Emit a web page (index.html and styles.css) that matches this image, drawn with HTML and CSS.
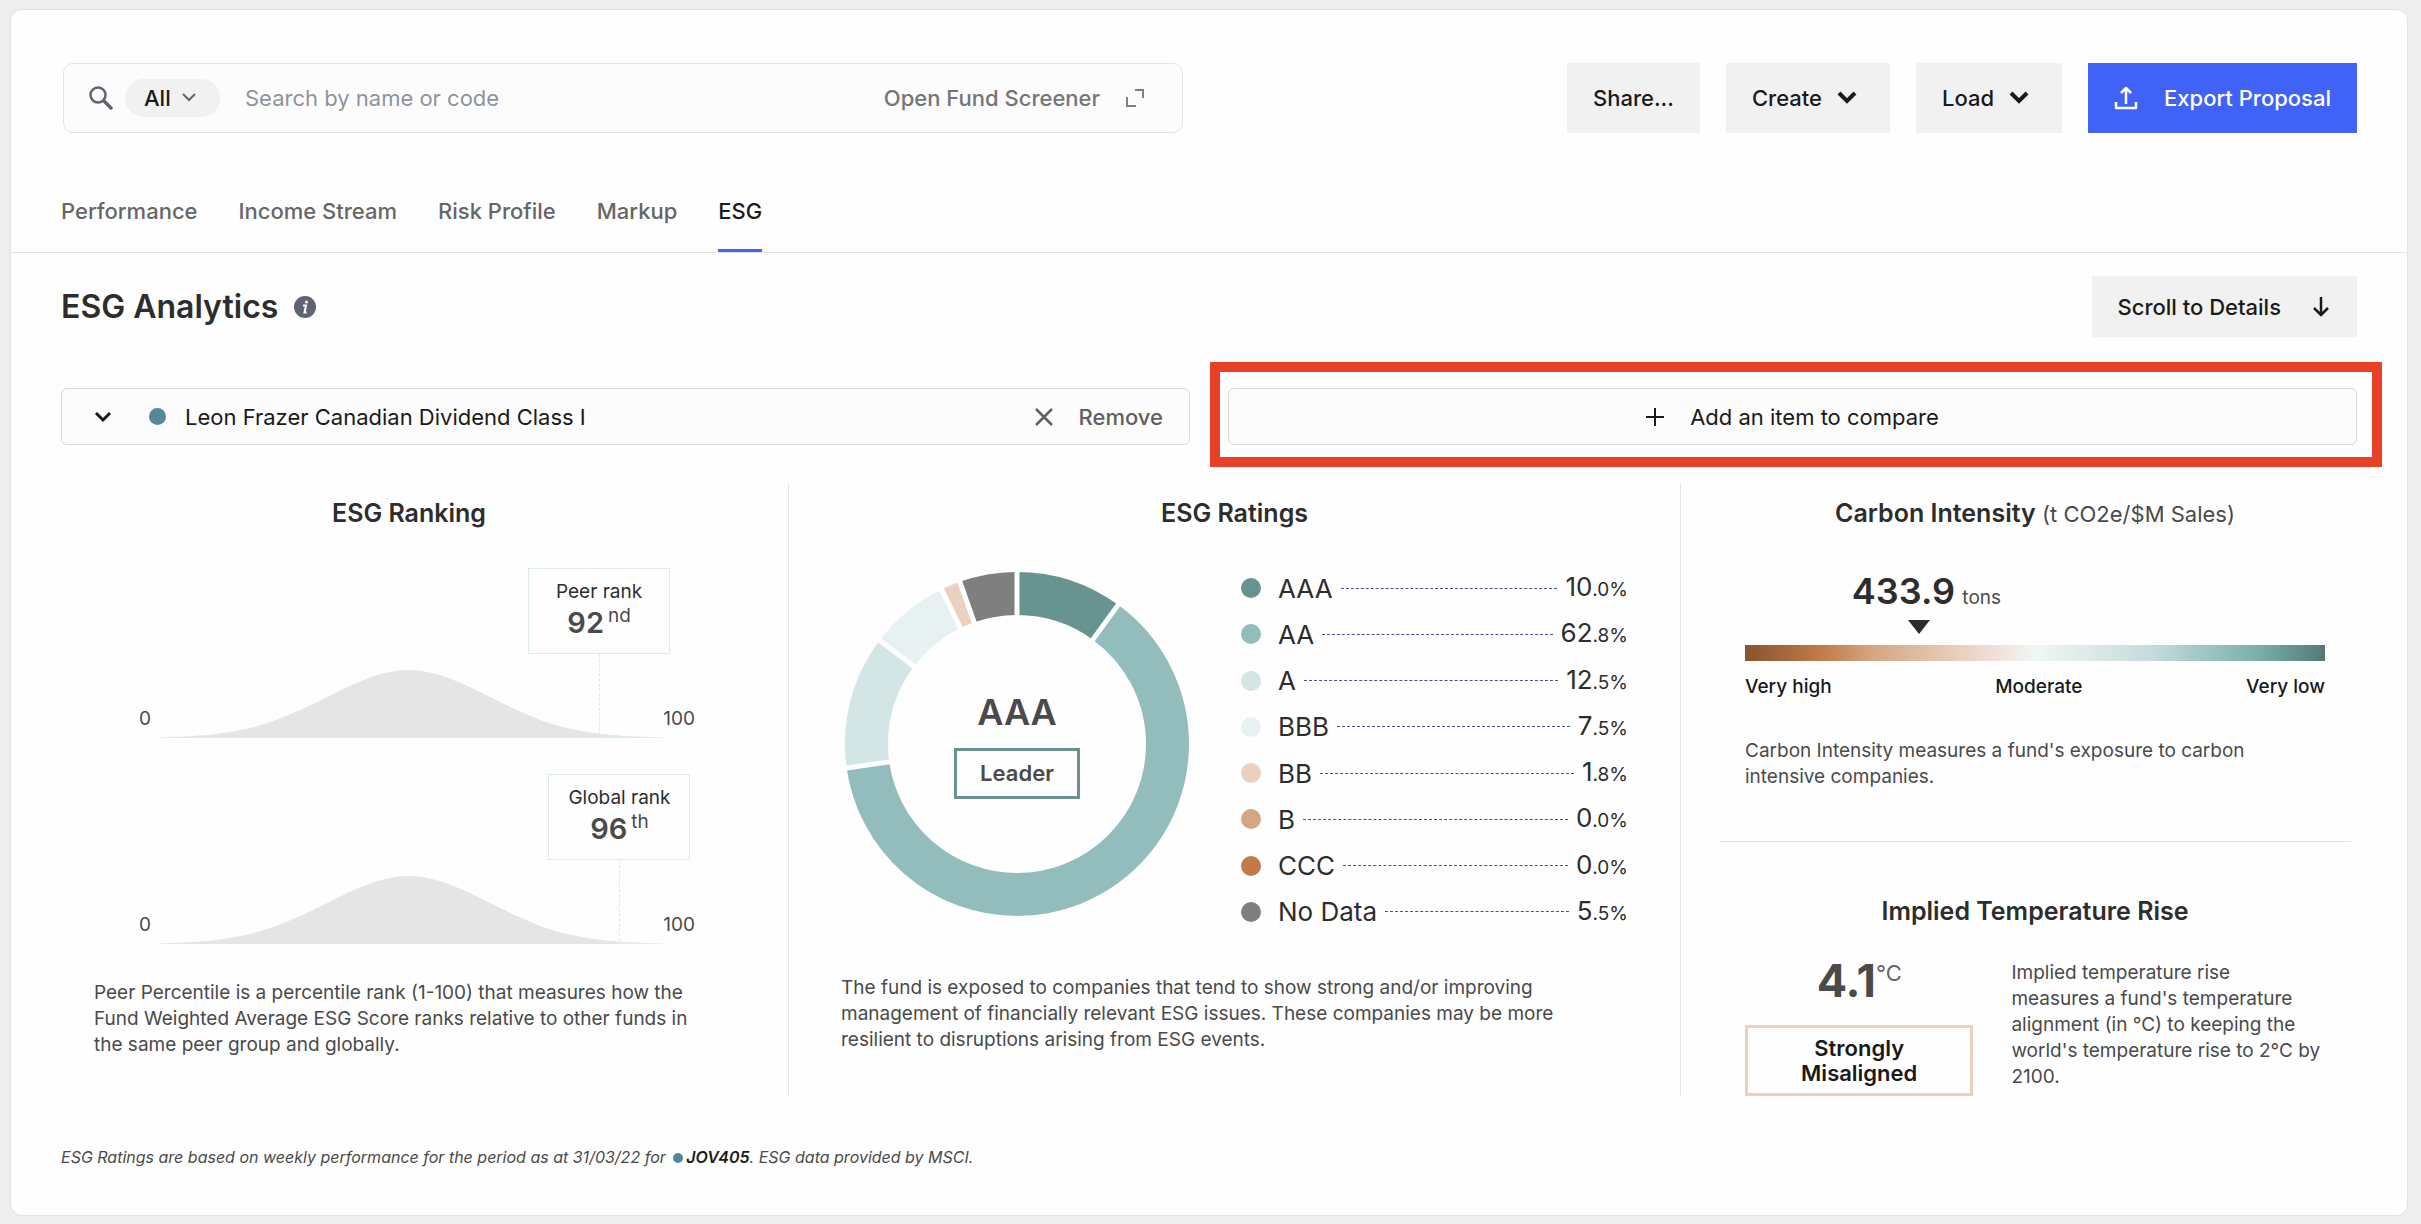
FILE: index.html
```html
<!DOCTYPE html>
<html lang="en">
<head>
    <meta charset="UTF-8">
    <meta name="viewport" content="width=device-width, initial-scale=1.0">
    <title>ESG Analytics</title>
    <link rel="stylesheet" href="styles.css">
</head>
<body>
    <main class="card">
        <!-- Search and page actions -->
        <header class="topbar">
            <div class="search">
                <svg class="search-icon" width="24" height="24" viewBox="0 0 24 24" fill="none" stroke="#5f6470" stroke-width="2.500">
                    <circle cx="9" cy="9" r="7.500"/>
                    <path d="M15 15l7 7" stroke-width="3.500" stroke-linecap="round"/>
                </svg>
                <div class="search-type">
                    <select aria-label="Search type">
                        <option>All</option>
                    </select>
                    <svg width="14" height="10" viewBox="0 0 14 10" fill="none" stroke="#5f6470" stroke-width="2"><path d="M1 1l6 6 6-6"/></svg>
                </div>
                <input class="search-input" type="text" placeholder="Search by name or code" aria-label="Search by name or code">
                <a class="screener-link" href="#">
                    Open Fund Screener
                    <svg width="18" height="18" viewBox="0 0 18 18" fill="none" stroke="#808080" stroke-width="2"><path d="M9 1h8v8M1 8v9h9"/></svg>
                </a>
            </div>
            <div class="actions">
                <button class="button">Share...</button>
                <button class="button menu">Create
                    <svg width="20" height="14" viewBox="0 0 20 14" fill="none" stroke="#1a1a1a" stroke-width="4"><path d="M2 2l8 8 8-8"/></svg>
                </button>
                <button class="button menu">Load
                    <svg width="20" height="14" viewBox="0 0 20 14" fill="none" stroke="#1a1a1a" stroke-width="4"><path d="M2 2l8 8 8-8"/></svg>
                </button>
                <button class="button primary">
                    <svg width="24" height="24" viewBox="0 0 24 24" fill="none" stroke="#fff" stroke-width="2.500"><path d="M12 18V3M7 7l5-5 5 5M2 16v6h20v-6" stroke-linejoin="round"/></svg>
                    Export Proposal
                </button>
            </div>
        </header>

        <!-- Tabs -->
        <nav class="tabs">
            <a class="tab" href="#">Performance</a>
            <a class="tab" href="#">Income Stream</a>
            <a class="tab" href="#">Risk Profile</a>
            <a class="tab" href="#">Markup</a>
            <a class="tab active" href="#">ESG</a>
        </nav>

        <div class="content">
            <div class="heading">
                <h1>ESG Analytics</h1>
                <svg width="22" height="22" viewBox="0 0 22 22"><circle cx="11" cy="11" r="11" fill="#5f6470"/><circle cx="12.500" cy="6" r="1.600" fill="#fff"/><path d="M9 9.500h3l-1.500 7h2" fill="none" stroke="#fff" stroke-width="2"/></svg>
                <button class="button scroll-button">Scroll to Details
                    <svg width="20" height="22" viewBox="0 0 20 22" fill="none" stroke="#1a1a1a" stroke-width="2.500"><path d="M10 1v18M3 12l7 7 7-7"/></svg>
                </button>
            </div>

            <!-- Funds being compared -->
            <div class="compare">
                <div class="fund">
                    <button class="plain-button" aria-label="Choose fund">
                        <svg width="18" height="12" viewBox="0 0 18 12" fill="none" stroke="#1a1a1a" stroke-width="3"><path d="M2 2l7 7 7-7"/></svg>
                    </button>
                    <span class="fund-dot"></span>
                    <span>Leon Frazer Canadian Dividend Class I</span>
                    <button class="plain-button remove">
                        <svg width="18" height="18" viewBox="0 0 18 18" fill="none" stroke="#606060" stroke-width="2.500"><path d="M1 1l16 16M17 1L1 17"/></svg>
                        Remove
                    </button>
                </div>
                <div class="add">
                    <button class="fund add-button">
                        <svg width="18" height="18" viewBox="0 0 18 18" fill="none" stroke="#1a1a1a" stroke-width="2"><path d="M9 0v18M0 9h18"/></svg>
                        Add an item to compare
                    </button>
                    <div class="highlight"></div>
                </div>
            </div>

            <div class="columns">
                <!-- Ranking -->
                <section class="column">
                    <h2>ESG Ranking</h2>
                    <div class="rank-chart">
                        <span class="axis">0</span>
                        <div class="plot">
                            <svg viewBox="0 0 510 68" preserveAspectRatio="none"><path fill="#e5e5e5" d="M0 68L10 67.200C37 66.500 64 64.900 91 58.800C118 52.700 145 40.500 172 26.800C199 13 226 0 253 0C280 0 307 13 334 26.800C361 40.500 388 52.700 415 58.800C442 64.900 469 66.500 496 67.200L510 68Z"/><path fill="#dcebe9" d="M442 63.500C460 66 478 66.800 496 67.200L510 68H442Z"/></svg>
                            <div class="marker" style="left: 87%">
                                <div class="marker-box">
                                    <span>Peer rank</span>
                                    <strong>92<sup>nd</sup></strong>
                                </div>
                            </div>
                        </div>
                        <span class="axis">100</span>
                    </div>
                    <div class="rank-chart">
                        <span class="axis">0</span>
                        <div class="plot">
                            <svg viewBox="0 0 510 68" preserveAspectRatio="none"><path fill="#e5e5e5" d="M0 68L10 67.200C37 66.500 64 64.900 91 58.800C118 52.700 145 40.500 172 26.800C199 13 226 0 253 0C280 0 307 13 334 26.800C361 40.500 388 52.700 415 58.800C442 64.900 469 66.500 496 67.200L510 68Z"/><path fill="#dcefe9" d="M462 65.800C473 66.500 485 66.900 496 67.200L510 68H462Z"/></svg>
                            <div class="marker" style="left: 91%">
                                <div class="marker-box">
                                    <span>Global rank</span>
                                    <strong>96<sup>th</sup></strong>
                                </div>
                            </div>
                        </div>
                        <span class="axis">100</span>
                    </div>
                    <p class="rank-text">Peer Percentile is a percentile rank (1-100) that measures how the Fund Weighted Average ESG Score ranks relative to other funds in the same peer group and globally.</p>
                </section>

                <!-- Ratings -->
                <section class="column ratings">
                    <h2>ESG Ratings</h2>
                    <div class="ratings-body">
                        <div class="donut">
                            <svg viewBox="-176 -176 352 352">
                                <g fill="none" stroke-width="43" transform="rotate(-90)">
                                    <circle r="150.500" pathLength="1000" stroke="#679390" stroke-dasharray="100 900"/>
                                    <circle r="150.500" pathLength="1000" stroke="#92bdbc" stroke-dasharray="628 372" stroke-dashoffset="-100"/>
                                    <circle r="150.500" pathLength="1000" stroke="#d3e5e4" stroke-dasharray="125 875" stroke-dashoffset="-728"/>
                                    <circle r="150.500" pathLength="1000" stroke="#e7f1f2" stroke-dasharray="75 925" stroke-dashoffset="-853"/>
                                    <circle r="150.500" pathLength="1000" stroke="#ebd2c0" stroke-dasharray="18 982" stroke-dashoffset="-928"/>
                                    <circle r="150.500" pathLength="1000" stroke="#7f7f7f" stroke-dasharray="53 947" stroke-dashoffset="-946"/>
                                </g>
                                <g stroke="#fff" stroke-width="5">
                                    <path d="M0-125V-176"/>
                                    <path d="M0-125V-176" transform="rotate(36)"/>
                                    <path d="M0-125V-176" transform="rotate(262)"/>
                                    <path d="M0-125V-176" transform="rotate(307)"/>
                                    <path d="M0-125V-176" transform="rotate(334)"/>
                                    <path d="M0-125V-176" transform="rotate(340.600)"/>
                                </g>
                            </svg>
                            <div class="donut-label">
                                <strong>AAA</strong>
                                <span class="leader">Leader</span>
                            </div>
                        </div>
                        <ul class="legend">
                            <li><i style="background: #679390"></i>AAA<hr><span>10<small>.0%</small></span></li>
                            <li><i style="background: #92bdbc"></i>AA<hr><span>62<small>.8%</small></span></li>
                            <li><i style="background: #d3e5e4"></i>A<hr><span>12<small>.5%</small></span></li>
                            <li><i style="background: #e7f1f2"></i>BBB<hr><span>7<small>.5%</small></span></li>
                            <li><i style="background: #ebd2c0"></i>BB<hr><span>1<small>.8%</small></span></li>
                            <li><i style="background: #d4a681"></i>B<hr><span>0<small>.0%</small></span></li>
                            <li><i style="background: #c27a48"></i>CCC<hr><span>0<small>.0%</small></span></li>
                            <li><i style="background: #7f7f7f"></i>No Data<hr><span>5<small>.5%</small></span></li>
                        </ul>
                    </div>
                    <p class="ratings-text">The fund is exposed to companies that tend to show strong and/or improving management of financially relevant ESG issues. These companies may be more resilient to disruptions arising from ESG events.</p>
                </section>

                <!-- Carbon and temperature -->
                <section class="column climate">
                    <h2>Carbon Intensity <small>(t CO2e/$M Sales)</small></h2>
                    <div class="gauge-value" style="margin-left: 30%"><strong>433.9</strong> tons</div>
                    <div class="gauge-pointer" style="margin-left: 30%"></div>
                    <div class="gauge-bar"></div>
                    <div class="gauge-labels">
                        <span>Very high</span>
                        <span>Moderate</span>
                        <span>Very low</span>
                    </div>
                    <p>Carbon Intensity measures a fund's exposure to carbon intensive companies.</p>
                    <div class="divider"></div>
                    <h2>Implied Temperature Rise</h2>
                    <div class="temperature">
                        <div>
                            <div class="degrees">4.1<sup>°C</sup></div>
                            <div class="misaligned">Strongly Misaligned</div>
                        </div>
                        <p>Implied temperature rise<br>measures a fund's temperature alignment (in °C) to keeping the world's temperature rise to 2°C by 2100.</p>
                    </div>
                </section>
            </div>

            <footer>ESG Ratings are based on weekly performance for the period as at 31/03/22 for <span class="code-dot"></span><b>JOV405</b>. ESG data provided by MSCI.</footer>
        </div>
    </main>
</body>
</html>
```

FILE: styles.css
```css
* {
    box-sizing: border-box;
}

body {
    margin: 0;
    padding: 9px 13px 9px 10px;
    background-color: #eeeeee;
    font-family: Inter, "Liberation Sans", sans-serif;
    font-size: 22px;
    color: #1a1a1a;
}

button, input, select {
    font: inherit;
    color: inherit;
}

svg {
    flex: none;
}

a {
    text-decoration: none;
}

h1, h2, p, ul {
    margin: 0;
    padding: 0;
}

.card {
    background-color: #fefefe;
    border: 1px solid #e3e3e3;
    border-radius: 12px;
}

/* Top bar */
.topbar {
    display: flex;
    justify-content: space-between;
    gap: 26px;
    padding: 53px 50px 0 52px;
}

.search {
    display: flex;
    align-items: center;
    flex: 0 1 1120px;
    height: 70px;
    padding: 0 38px 0 25px;
    background-color: #fcfcfc;
    border: 1px solid #e3e3e3;
    border-radius: 10px;
}

.search-type {
    display: flex;
    align-items: center;
    height: 38px;
    margin: 0 23px 0 12px;
    padding: 0 24px 0 19px;
    background-color: #f1f1f1;
    border-radius: 19px;
}

.search-type select {
    appearance: none;
    width: 38px;
    padding: 0;
    background: none;
    border: none;
    font-weight: 500;
}

.search-input {
    flex: 1;
    min-width: 0;
    padding: 0 2px;
    background: none;
    border: none;
    outline: none;
}

.search-input::placeholder {
    color: #8e949c;
}

.screener-link {
    display: flex;
    align-items: center;
    gap: 26px;
    color: #757575;
    font-weight: 500;
}

.actions {
    display: flex;
    gap: 26px;
}

.button {
    display: flex;
    align-items: center;
    height: 70px;
    padding: 0 26px;
    background-color: #f1f1f1;
    border: none;
    font-weight: 500;
    white-space: nowrap;
    cursor: pointer;
}

.menu {
    gap: 15px;
    padding-right: 33px;
}

.primary {
    gap: 26px;
    background-color: #4062f6;
    color: #ffffff;
}

/* Tabs */
.tabs {
    display: flex;
    gap: 41px;
    padding: 49px 50px 0;
    border-bottom: 1px solid #e3e3e3;
}

.tab {
    height: 70px;
    padding-top: 16px;
    border-bottom: 3px solid transparent;
    color: #666666;
    font-weight: 500;
    line-height: 26px;
}

.tab.active {
    border-color: #4062f6;
    color: #1a1a1a;
}

.content {
    padding: 23px 50px 45px;
}

.heading {
    display: flex;
    align-items: center;
    gap: 16px;
}

h1 {
    color: #2d2d2d;
    font-size: 32px;
    font-weight: 600;
}

.scroll-button {
    gap: 30px;
    height: 61px;
    margin-left: auto;
}

/* Compared funds */
.compare {
    display: grid;
    grid-template-columns: 1fr 1fr;
    gap: 38px;
    margin-top: 51px;
}

.fund {
    display: flex;
    align-items: center;
    width: 100%;
    height: 57px;
    padding: 0 26px 0 32px;
    background-color: #fcfcfc;
    border: 1px solid #d9d9d9;
    border-radius: 6px;
}

.plain-button {
    display: flex;
    align-items: center;
    padding: 0;
    background: none;
    border: none;
    cursor: pointer;
}

.fund-dot {
    width: 17px;
    height: 17px;
    margin: 0 19px 0 37px;
    background-color: #54869c;
    border-radius: 50%;
}

.remove {
    gap: 26px;
    margin-left: auto;
    color: #606060;
    font-weight: 500;
}

.add {
    position: relative;
}

.add-button {
    justify-content: center;
    gap: 26px;
    padding: 0 26px;
    cursor: pointer;
}

/* Callout frame over the add button */
.highlight {
    position: absolute;
    inset: -26px -25px -22px -18px;
    border: 10px solid #ea4025;
    pointer-events: none;
}

/* Analytics columns */
.columns {
    display: grid;
    grid-template-columns: 758fr 892fr 709fr;
    margin: 39px -32px 0 -31px;
}

.column {
    padding-top: 13px;
    color: #4a4a4a;
    font-size: 19px;
    line-height: 26px;
}

.column + .column {
    border-left: 1px solid #e5e5e5;
}

h2 {
    margin-bottom: 39px;
    color: #2d2d2d;
    font-size: 25px;
    font-weight: 600;
    line-height: 32px;
    text-align: center;
}

h2 small {
    color: #4a4a4a;
    font-size: 22px;
    font-weight: 400;
}

/* Ranking */
.rank-chart {
    display: flex;
    align-items: flex-end;
    height: 170px;
    margin: 0 93px 36px 109px;
}

.axis {
    padding-bottom: 6px;
}

.plot {
    position: relative;
    flex: 1;
    height: 170px;
    margin: 0 -2px 0 5px;
    padding-top: 102px;
}

.plot svg {
    display: block;
    width: 100%;
    height: 68px;
}

.marker {
    position: absolute;
    top: 0;
    bottom: 3px;
    display: flex;
    flex-direction: column;
    align-items: center;
    transform: translateX(-50%);
}

.marker::after {
    content: "";
    flex: 1;
    border-left: 1px dashed #dcebe9;
}

.marker-box {
    display: flex;
    flex-direction: column;
    align-items: center;
    width: 142px;
    height: 86px;
    padding-top: 10px;
    background-color: #fefefe;
    border: 1px solid #dcebe9;
    color: #2d2d2d;
    white-space: nowrap;
}

.marker-box strong {
    color: #4a4a4a;
    font-size: 29px;
    font-weight: 600;
    line-height: 36px;
}

.marker-box sup {
    margin-left: 4px;
    font-size: 19px;
    font-weight: 400;
    line-height: 0;
}

.rank-text {
    padding: 0 80px 0 64px;
}

/* Ratings */
.ratings {
    padding-left: 52px;
    padding-right: 52px;
}

.ratings-body {
    display: flex;
    gap: 48px;
}

.donut {
    display: grid;
    flex: 0 0 352px;
    height: 352px;
    place-items: center;
}

.donut > * {
    grid-area: 1 / 1;
}

.donut-label {
    display: flex;
    flex-direction: column;
    align-items: center;
    gap: 14px;
    font-weight: 600;
}

.donut-label strong {
    font-size: 36px;
    font-weight: 600;
    line-height: 44px;
}

.leader {
    padding: 10px 23px;
    border: 3px solid #679390;
    font-size: 22px;
    line-height: 25px;
}

.legend {
    display: flex;
    flex: 1;
    flex-direction: column;
    justify-content: space-between;
    height: 358px;
    margin-top: 3px;
    list-style: none;
}

.legend li {
    display: flex;
    align-items: center;
    color: #2d2d2d;
    font-size: 26px;
    line-height: 31px;
}

.legend i {
    width: 20px;
    height: 20px;
    margin-right: 17px;
    border-radius: 50%;
}

.legend hr {
    flex: 1;
    margin: 0 8px;
    border: none;
    border-top: 1px dashed #4b4f86;
}

.legend small {
    font-size: 19px;
}

.ratings-text {
    margin-top: 46px;
}

/* Carbon intensity gauge */
.climate {
    padding-left: 64px;
    padding-right: 64px;
}

.gauge-value {
    width: max-content;
    transform: translateX(-45%);
    line-height: 44px;
}

.gauge-value strong {
    margin-right: 2px;
    color: #2d2d2d;
    font-size: 36px;
    font-weight: 600;
}

.gauge-pointer {
    width: 22px;
    height: 14px;
    background-color: #2d2d2d;
    clip-path: polygon(0 0, 100% 0, 50% 100%);
    transform: translateX(-50%);
}

.gauge-bar {
    height: 16px;
    margin-top: 11px;
    background: linear-gradient(to right, #85542f, #c27a48 13%, #d4a681 22%, #e9cdbb 36%, #f0e6de 45%, #f0f6f5 50%, #c5dcda 70%, #7bb1ad 88%, #527a77);
}

.gauge-labels {
    display: flex;
    justify-content: space-between;
    margin: 13px 0 38px;
    color: #1a1a1a;
    font-weight: 500;
}

.divider {
    margin: 51px -26px 53px;
    border-top: 1px solid #e3e3e3;
}

.divider + h2 {
    margin-bottom: 33px;
}

.temperature {
    display: grid;
    grid-template-columns: 228fr 313fr;
    gap: 38px;
}

.degrees {
    font-size: 45px;
    font-weight: 700;
    line-height: 42px;
    text-align: center;
}

.degrees sup {
    color: #666666;
    font-size: 22px;
    font-weight: 400;
    line-height: 0;
}

.misaligned {
    margin-top: 23px;
    padding: 8px 40px 7px;
    border: 3px solid #ebd2c0;
    color: #1a1a1a;
    font-size: 22px;
    font-weight: 600;
    line-height: 25px;
    text-align: center;
}

footer {
    margin-top: 48px;
    color: #4a4a4a;
    font-size: 16px;
    font-style: italic;
    line-height: 26px;
}

footer b {
    color: #1a1a1a;
    font-weight: 600;
}

.code-dot {
    display: inline-block;
    width: 10px;
    height: 10px;
    margin: 0 3px;
    background-color: #54869c;
    border-radius: 50%;
}
```
